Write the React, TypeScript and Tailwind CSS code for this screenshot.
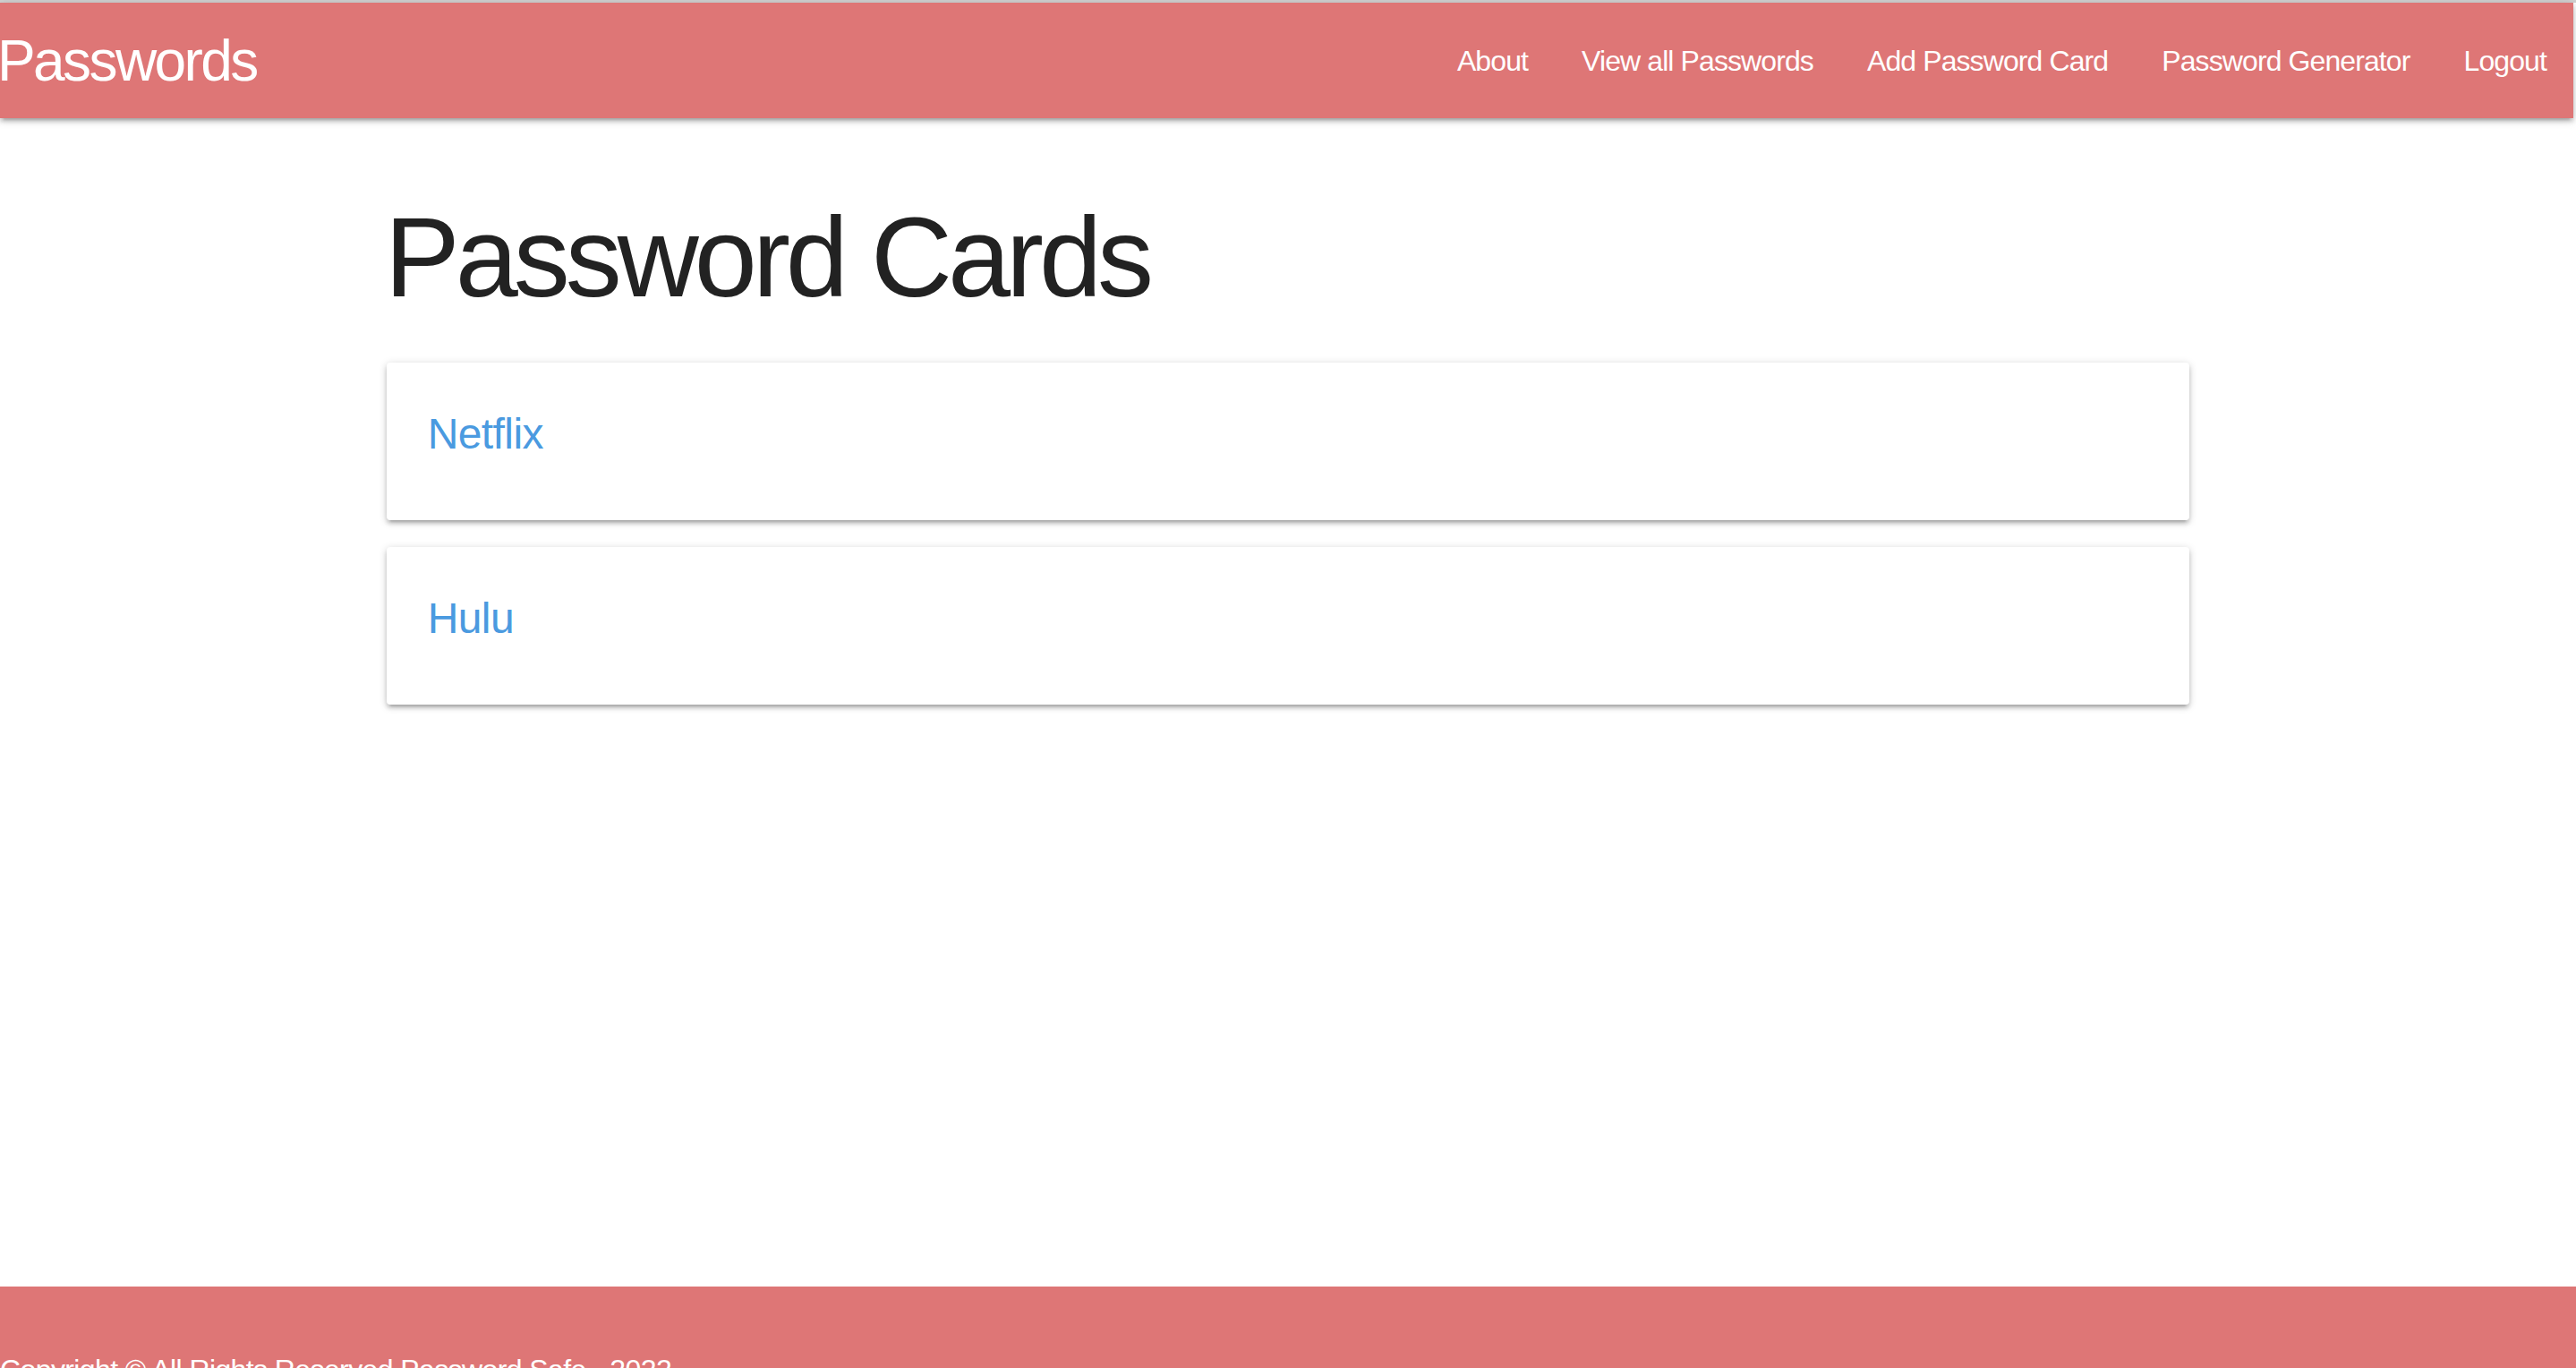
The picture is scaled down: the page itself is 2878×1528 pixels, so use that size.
import React from 'react';

const navLinks = ['About', 'View all Passwords', 'Add Password Card', 'Password Generator', 'Logout'];

const cards = [
  { id: 'netflix', title: 'Netflix' },
  { id: 'hulu', title: 'Hulu' },
];

const App = () => {
  return (
    <div className="min-h-screen bg-white font-['Liberation_Sans',Arial,sans-serif]">
      {/* Top nav */}
      <div className="border-t-[3px] border-[#d2d2d2]">
        <nav className="relative z-10 mr-[3px] flex h-[129px] items-center justify-between bg-[#de7676] shadow-[0_4px_4px_0_rgba(0,0,0,0.14),0_6px_2px_-4px_rgba(0,0,0,0.12),0_2px_10px_0_rgba(0,0,0,0.2)]">
          <a className="-ml-[3px] text-[64px] leading-none tracking-[-2.6px] text-white">Passwords</a>
          <ul className="flex">
            {navLinks.map((link) => (
              <li key={link}>
                <a className="block px-[30px] text-[32px] leading-[128px] tracking-[-0.9px] text-white">{link}</a>
              </li>
            ))}
          </ul>
        </nav>
      </div>

      <main className="h-[1305px]">
        <div className="mx-auto w-[70%] pt-[87px]">
          <h1 className="-ml-[2px] text-[126px] leading-[138px] tracking-[-5px] text-[#222222]">Password Cards</h1>

          <div className="mt-[48px] flex flex-col gap-[30px]">
            {cards.map((card) => (
              <div
                key={card.id}
                className="rounded-[4px] bg-white p-[48px] shadow-[0_4px_4px_0_rgba(0,0,0,0.14),0_6px_2px_-4px_rgba(0,0,0,0.12),0_2px_10px_0_rgba(0,0,0,0.2)]"
              >
                <a className="-ml-[2px] mb-[16px] block text-[48px] leading-[64px] tracking-[-0.6px] text-[#4a9ae0]">{card.title}</a>
              </div>
            ))}
          </div>
        </div>
      </main>

      {/* Footer */}
      <footer className="bg-[#de7676] pt-[73px] pb-[40px]">
        <div className="text-[32px] leading-[40px] tracking-[-0.6px] text-white">
          Copyright © All Rights Reserved Password Safe - 2022
        </div>
      </footer>
    </div>
  );
};

export default App;
